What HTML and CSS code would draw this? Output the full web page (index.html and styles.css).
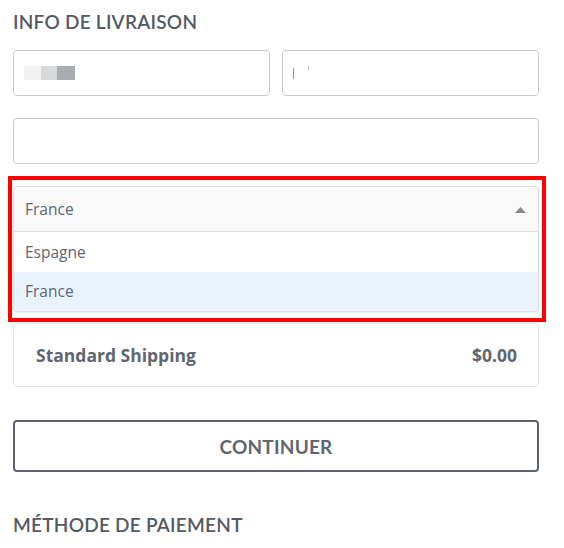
FILE: index.html
```html
<!DOCTYPE html>
<html lang="fr">
<head>
<meta charset="utf-8">
<title>Info de livraison</title>
<link rel="stylesheet" href="styles.css">
</head>
<body>
<main class="checkout">
  <h2 class="section-title">INFO DE LIVRAISON</h2>
  <div class="row two">
    <div class="field"><span class="blur b1"></span><span class="blur b2"></span><span class="blur b3"></span></div>
    <div class="field"><span class="caret"></span><span class="tick"></span></div>
  </div>
  <div class="row">
    <div class="field"></div>
  </div>
  <div class="select-wrap">
    <div class="select">
      <span>France</span>
      <svg class="arrow" width="11" height="6" viewBox="0 0 11 6"><path d="M0 6 L5.5 0 L11 6 Z" fill="#8a8a8a"/></svg>
    </div>
    <ul class="options">
      <li class="option">Espagne</li>
      <li class="option active">France</li>
    </ul>
    <div class="highlight"></div>
  </div>
  <div class="shipping">
    <span>Standard Shipping</span>
    <span>$0.00</span>
  </div>
  <button class="continue">CONTINUER</button>
  <h2 class="section-title second">MÉTHODE DE PAIEMENT</h2>
</main>
</body>
</html>
```
FILE: styles.css
```css
* { box-sizing: border-box; }
html, body { margin: 0; padding: 0; background: #fff; }
body { font-family: "Open Sans", "Liberation Sans", sans-serif; color: #5f6670; }
.checkout { width: 526px; margin-left: 13px; padding-top: 10px; }
.section-title {
  font-family: Lato, "Liberation Sans", sans-serif;
  font-weight: 600;
  font-size: 19px;
  line-height: 23px;
  margin: 0;
  color: #545a63;
  letter-spacing: 0.25px;
}
.row { display: flex; gap: 12px; margin-top: 17px; }
.row + .row { margin-top: 22px; }
.field {
  flex: 1;
  height: 46px;
  border: 1px solid #c9cbd0;
  border-radius: 4px;
  position: relative;
  display: flex;
  align-items: center;
  padding-left: 10px;
}
.blur { display: inline-block; height: 14px; }
.b1 { width: 17px; background: #f1f1f1; }
.b2 { width: 16px; background: #d7d9dc; }
.b3 { width: 18px; background: #a9adb2; }
.caret { display: inline-block; width: 1px; height: 11px; background: #8f949a; }
.tick { display: inline-block; width: 1px; height: 5px; background: #c4c7cb; margin-left: 14px; align-self: flex-start; margin-top: 15px; }
.select-wrap { position: relative; margin-top: 22px; }
.select {
  height: 46px;
  background: #f9f9f9;
  border: 1px solid #dedede;
  border-radius: 4px 4px 0 0;
  display: flex;
  align-items: center;
  justify-content: space-between;
  padding: 0 12px 0 11px;
  font-size: 15.5px;
  color: #5f6670;
}
.arrow { display: block; margin-top: 1px; }
.options {
  list-style: none;
  margin: 0;
  padding: 0;
  border: 1px solid #dcdcdc;
  border-top: 0;
  border-radius: 0 0 4px 4px;
  overflow: hidden;
  box-shadow: 0 1px 2px rgba(0,0,0,0.08);
}
.option { height: 40px; line-height: 40px; padding-left: 11px; font-size: 15.5px; color: #5f6670; }
.option.active { background: #e8f3fe; height: 39px; line-height: 39px; }
.highlight {
  position: absolute;
  left: -5px; top: -10px; right: -7px; bottom: -10px;
  border: 4px solid #ff0000;
  pointer-events: none;
}
.shipping {
  margin-top: 11px;
  height: 64px;
  border: 1px solid #e6e6e6;
  border-radius: 4px;
  display: flex;
  align-items: center;
  justify-content: space-between;
  padding: 0 21px 0 22px;
  font-weight: 700;
  font-size: 17.5px;
  color: #5f6670;
}
.continue {
  display: block;
  width: 100%;
  height: 52px;
  margin-top: 33px;
  border: 2px solid #5d626c;
  border-radius: 4px;
  background: #fff;
  font-family: Lato, "Liberation Sans", sans-serif;
  font-weight: 700;
  font-size: 19px;
  color: #5f6670;
  letter-spacing: 0.2px;
}
.section-title.second { margin-top: 41px; }
```
